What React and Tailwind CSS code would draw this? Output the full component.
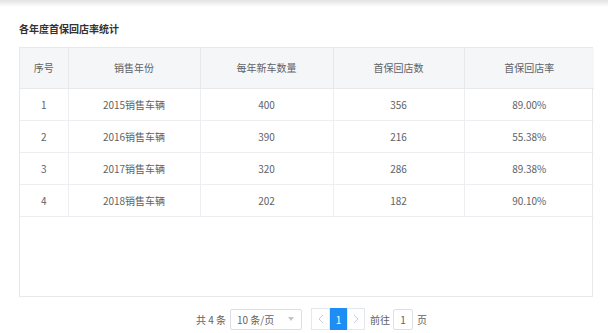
const rows = [
  { id: 1, year: '2015销售车辆', count: 400, back: 356, rate: '89.00%' },
  { id: 2, year: '2016销售车辆', count: 390, back: 216, rate: '55.38%' },
  { id: 3, year: '2017销售车辆', count: 320, back: 286, rate: '89.38%' },
  { id: 4, year: '2018销售车辆', count: 202, back: 182, rate: '90.10%' },
];

const cols = ['w-[48px]', 'w-[132px]', 'w-[133px]', 'w-[131px]', 'w-[130px]'];

const Chevron = ({ left }) => (
  <svg width="6" height="10" viewBox="0 0 6 10" fill="none" stroke="#c8ccd3" strokeWidth="1">
    <path d={left ? 'M5 1 L1 5 L5 9' : 'M1 1 L5 5 L1 9'} />
  </svg>
);

const App = () => {
  return (
    <div
      className="w-[608px] h-[333px] bg-white overflow-hidden text-[#606266]"
      style={{ fontFamily: '"Noto Sans CJK SC", "Noto Sans", sans-serif' }}
    >
      <div className="h-[7px] bg-gradient-to-b from-[#e2e2e2] to-white" />
      <div className="pl-[19px] pt-[15px] text-[10px] font-bold text-[#333] leading-[14px]">
        各年度首保回店率统计
      </div>

      <div className="ml-[19px] mt-[11px] w-[574px] h-[250px] border border-[#e6e8ec]">
        <table className="table-fixed border-collapse w-full text-[10px]">
          <colgroup>
            {cols.map((c, i) => (
              <col key={i} className={c} />
            ))}
          </colgroup>
          <thead>
            <tr className="h-[40px] bg-[#f5f6f8]">
              {['序号', '销售年份', '每年新车数量', '首保回店数', '首保回店率'].map((h, i) => (
                <th
                  key={h}
                  className={`font-normal text-center border-b border-[#e6e8ec] ${i < 4 ? 'border-r' : ''}`}
                >
                  {h}
                </th>
              ))}
            </tr>
          </thead>
          <tbody>
            {rows.map((r) => (
              <tr key={r.id} className="h-[32px]">
                {[r.id, r.year, r.count, r.back, r.rate].map((v, i) => (
                  <td
                    key={i}
                    className={`text-center border-b border-[#eceef1] ${i < 4 ? 'border-r' : ''}`}
                  >
                    {v}
                  </td>
                ))}
              </tr>
            ))}
          </tbody>
        </table>
      </div>

      <div className="mt-[11px] ml-[196px] flex items-center text-[10px] text-[#606266] h-[22px]">
        <span className="mr-[4px]">共 4 条</span>
        <div className="w-[72px] h-[21px] border border-[#dcdfe6] rounded-[2px] flex items-center justify-between pl-[6px] pr-[7px]">
          <span>10 条/页</span>
          <span className="w-0 h-0 border-l-[3px] border-r-[3px] border-t-[4px] border-l-transparent border-r-transparent border-t-[#c0c4cc]" />
        </div>
        <div className="ml-[9px] flex items-center">
          <div className="w-[19px] h-[22px] border border-[#e4e7ed] flex items-center justify-center">
            <Chevron left />
          </div>
          <div className="w-[17px] h-[22px] bg-[#1e8ef5] text-white flex items-center justify-center">
            1
          </div>
          <div className="w-[18px] h-[22px] border border-[#e4e7ed] flex items-center justify-center">
            <Chevron />
          </div>
        </div>
        <span className="ml-[5px]">前往</span>
        <div className="ml-[3px] w-[20px] h-[21px] border border-[#dcdfe6] rounded-[2px] flex items-center justify-center">
          1
        </div>
        <span className="ml-[4px]">页</span>
      </div>
    </div>
  );
};

export default App;
